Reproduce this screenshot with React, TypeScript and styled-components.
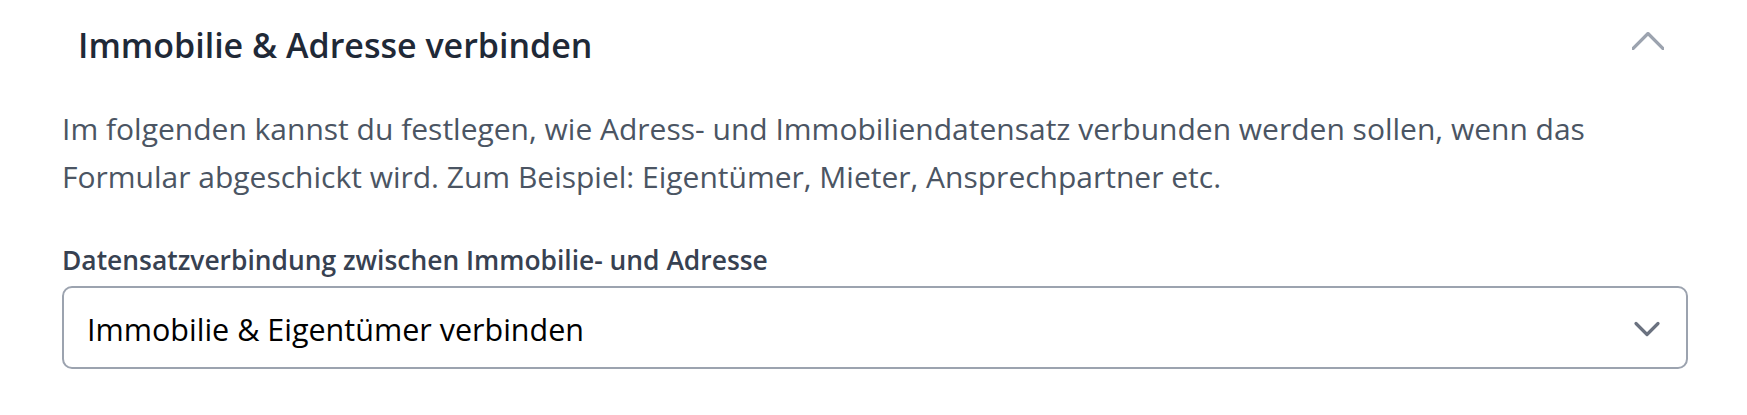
import React from 'react';
import styled, { createGlobalStyle } from 'styled-components';

const GlobalStyle = createGlobalStyle`
  body {
    margin: 0;
    background: #fff;
    font-family: "Open Sans", "Noto Sans", sans-serif;
  }
`;

const Panel = styled.section`
  display: flex;
  flex-direction: column;
  padding: 0 59px 0 62px;
`;

const Header = styled.button`
  display: flex;
  align-items: center;
  justify-content: space-between;
  width: 100%;
  height: 82px;
  padding: 0 24px 0 16px;
  border: none;
  background: transparent;
  cursor: pointer;
  font-family: inherit;
`;

const Title = styled.h2`
  margin: 0;
  padding-top: 8px;
  font-size: 34px;
  font-weight: 600;
  color: #1f2937;
`;

const Intro = styled.p`
  margin: 23px 0 0 0;
  font-size: 30px;
  line-height: 48px;
  color: #4b5563;
`;

const Field = styled.div`
  display: flex;
  flex-direction: column;
  gap: 8px;
  margin-top: 41px;
`;

const Label = styled.label`
  font-size: 26.4px;
  font-weight: 600;
  color: #374151;
`;

const SelectBox = styled.div`
  display: flex;
  align-items: center;
  justify-content: space-between;
  height: 83px;
  box-sizing: border-box;
  padding: 3px 23px 0 23px;
  border: 2px solid #9ca3af;
  border-radius: 10px;
  font-size: 30.5px;
  color: #000;
`;

function Chevron({ up, color }: { up?: boolean; color: string }) {
  return (
    <svg width="32" height="18" viewBox="0 0 32 18" fill="none">
      <path
        d={up ? 'M1 16.5 L16 1.5 L31 16.5' : 'M5 3.5 L16 14.5 L27 3.5'}
        stroke={color}
        strokeWidth="3.2"
        strokeLinecap="round"
        strokeLinejoin="round"
      />
    </svg>
  );
}

export default function App() {
  return (
    <>
      <GlobalStyle />
      <Panel>
        <Header>
          <Title>Immobilie &amp; Adresse verbinden</Title>
          <Chevron up color="#9ca3af" />
        </Header>
        <Intro>
          Im folgenden kannst du festlegen, wie Adress- und Immobiliendatensatz verbunden werden sollen, wenn das
          Formular abgeschickt wird. Zum Beispiel: Eigentümer, Mieter, Ansprechpartner etc.
        </Intro>
        <Field>
          <Label>Datensatzverbindung zwischen Immobilie- und Adresse</Label>
          <SelectBox>
            <span>Immobilie &amp; Eigentümer verbinden</span>
            <Chevron color="#6b7280" />
          </SelectBox>
        </Field>
      </Panel>
    </>
  );
}
